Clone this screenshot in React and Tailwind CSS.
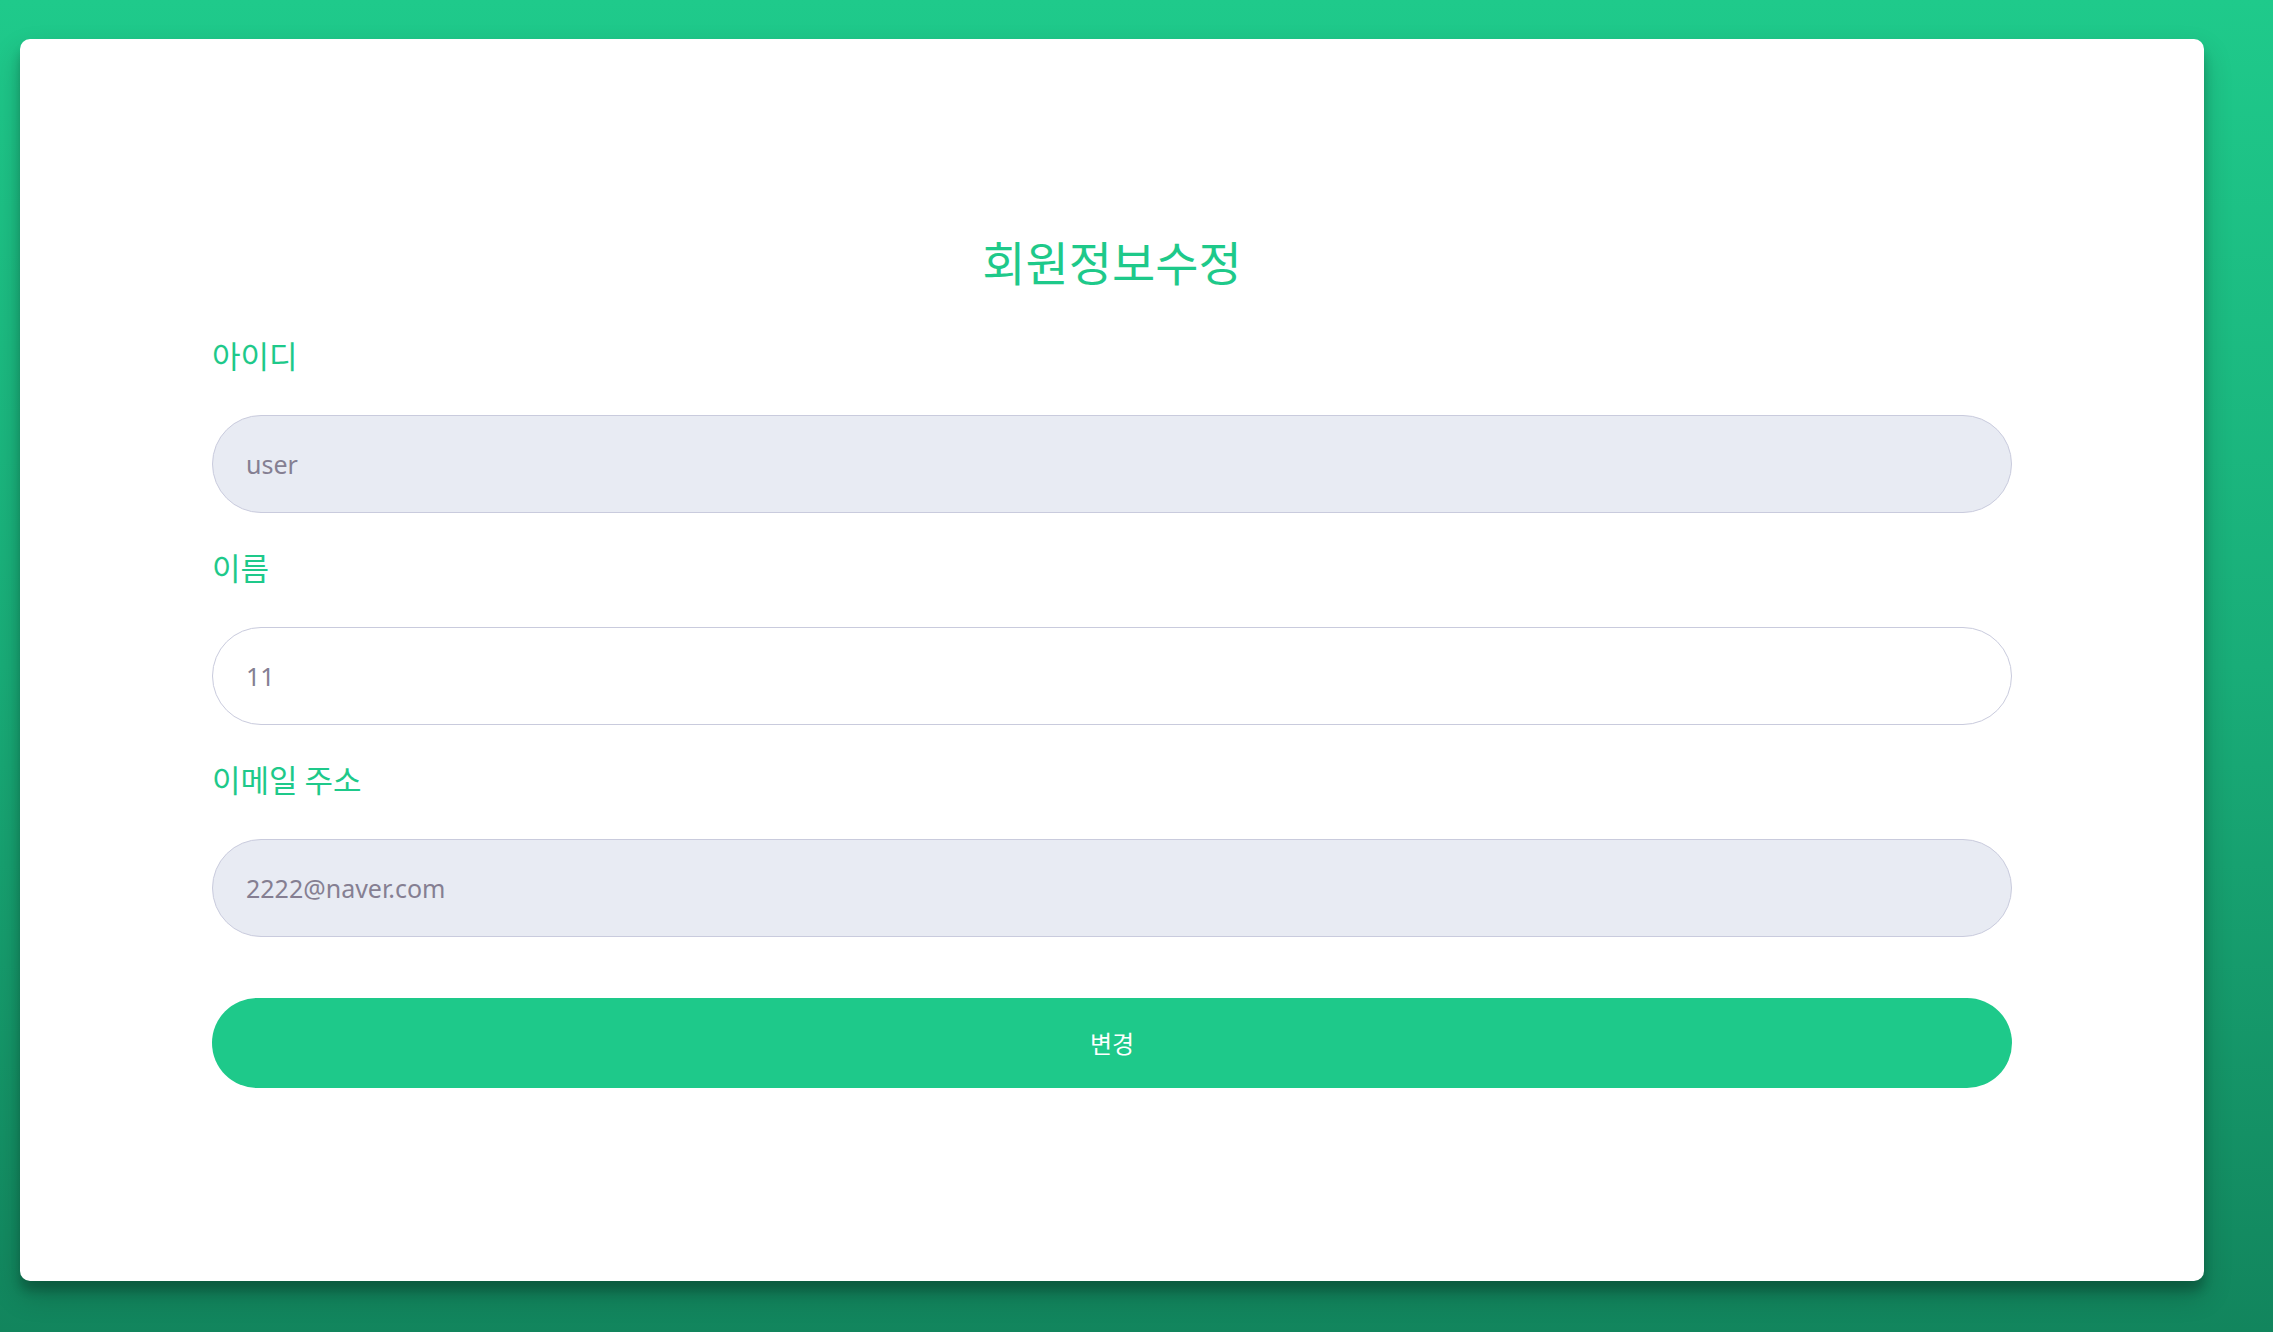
import React from "react";

const field =
  "block w-full h-[98px] rounded-full border-[1.5px] border-[#c9cbdd] px-[33px] text-[25px] text-[#857f92] outline-none font-['Noto_Sans','Noto_Sans_CJK_KR',sans-serif]";

const label =
  "block text-[31px] leading-[40px] h-[40px] text-[#1ec98a] mb-[40px] font-['Noto_Sans_CJK_KR',sans-serif]";

export default function App() {
  return (
    <div className="w-full h-[1332px] overflow-hidden bg-[linear-gradient(180deg,#1fca8b_0%,#19ad78_50%,#12855d_100%)] pt-[39px] pl-[20px] font-['Noto_Sans','Noto_Sans_CJK_KR',sans-serif]">
      <div className="w-[2184px] h-[1242px] bg-white rounded-[10px] shadow-[0_14px_28px_rgba(0,0,0,0.22),0_10px_10px_rgba(0,0,0,0.18)] px-[192px] pt-[192px] flex flex-col">
        <h1 className="text-center text-[47px] leading-[60px] h-[60px] text-[#1ec98a] font-normal mb-[44px] font-['Noto_Sans_CJK_KR',sans-serif]">
          회원정보수정
        </h1>

        <label className={label}>아이디</label>
        <input className={field + " bg-[#e8ebf3]"} defaultValue="user" readOnly />

        <label className={label + " mt-[34px]"}>이름</label>
        <input className={field + " bg-white"} defaultValue="11" />

        <label className={label + " mt-[34px]"}>이메일 주소</label>
        <input className={field + " bg-[#e8ebf3]"} defaultValue="2222@naver.com" readOnly />

        <button className="mt-[61px] w-full h-[90px] rounded-full bg-[#1ec98a] text-white text-[24px] flex items-center justify-center font-['Noto_Sans_CJK_KR',sans-serif]">
          변경
        </button>
      </div>
    </div>
  );
}
